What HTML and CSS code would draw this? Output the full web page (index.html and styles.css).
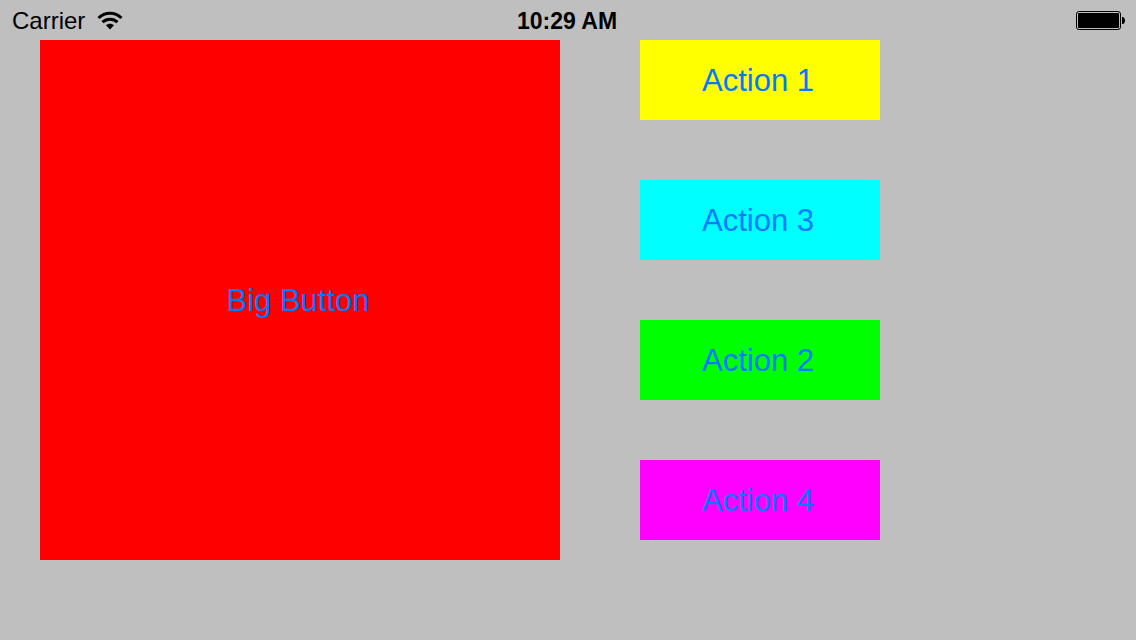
FILE: index.html
```html
<!DOCTYPE html>
<html lang="en">
<head>
<meta charset="utf-8">
<title>Buttons</title>
<link rel="stylesheet" href="styles.css">
</head>
<body>
<header class="status">
  <div class="status-left">
    <span>Carrier</span>
    <svg class="wifi" viewBox="0 0 26 20" aria-hidden="true">
      <path class="arc" d="M1.500 7C8 .7 18 .7 24.500 7"/>
      <path class="arc" d="M5.500 11.200C9.800 7.200 16.200 7.200 20.500 11.200"/>
      <path d="M9 14.200C11.300 12.200 14.700 12.200 17 14.200L13 18.500Z"/>
    </svg>
  </div>
  <time class="clock">10:29 AM</time>
  <div class="status-right">
    <svg class="battery" viewBox="0 0 50 20" aria-hidden="true">
      <rect class="shell" x=".5" y=".5" width="44" height="18" rx="2.500"/>
      <rect x="2" y="2" width="41" height="15" rx="1"/>
      <path d="M46 6H47C49.700 7 49.700 12 47 13H46Z"/>
    </svg>
  </div>
</header>
<main class="content">
  <button class="big" type="button">Big Button</button>
  <div class="actions">
    <button class="action yellow" type="button">Action 1</button>
    <button class="action cyan" type="button">Action 3</button>
    <button class="action green" type="button">Action 2</button>
    <button class="action magenta" type="button">Action 4</button>
  </div>
</main>
</body>
</html>
```
FILE: styles.css
```css
* { box-sizing: border-box; }
body {
  margin: 0;
  min-height: 100vh;
  background: #bfbfbf;
  color: #000;
  font-family: "Liberation Sans", Arial, sans-serif;
}
.status {
  display: grid;
  grid-template-columns: 1fr auto 1fr;
  align-items: center;
  height: 40px;
  padding: 2px 10px 0 12px;
  font-size: 24px;
}
.status-left { display: flex; align-items: center; gap: 12px; }
.status-right { display: flex; justify-content: flex-end; }
.clock { padding-right: 4px; font-weight: bold; font-size: 23px; }
.wifi { width: 26px; height: 20px; }
.arc { fill: none; stroke: #000; stroke-width: 3; }
.battery { width: 50px; height: 20px; }
.shell { fill: none; stroke: #000; stroke-width: 1; }
.content {
  display: grid;
  grid-template-columns: 13fr 6fr;
  column-gap: 80px;
  align-items: start;
  padding: 0 256px 40px 40px;
}
button {
  border: 0;
  padding: 2px 4px 0 0;
  font: inherit;
  font-size: 31px;
  color: #007aff;
}
.big { aspect-ratio: 1; background: #f00; }
.actions { display: grid; gap: 60px; }
.action { height: 80px; }
.yellow { background: #ff0; }
.cyan { background: #0ff; }
.green { background: #0f0; }
.magenta { background: #f0f; }
```
